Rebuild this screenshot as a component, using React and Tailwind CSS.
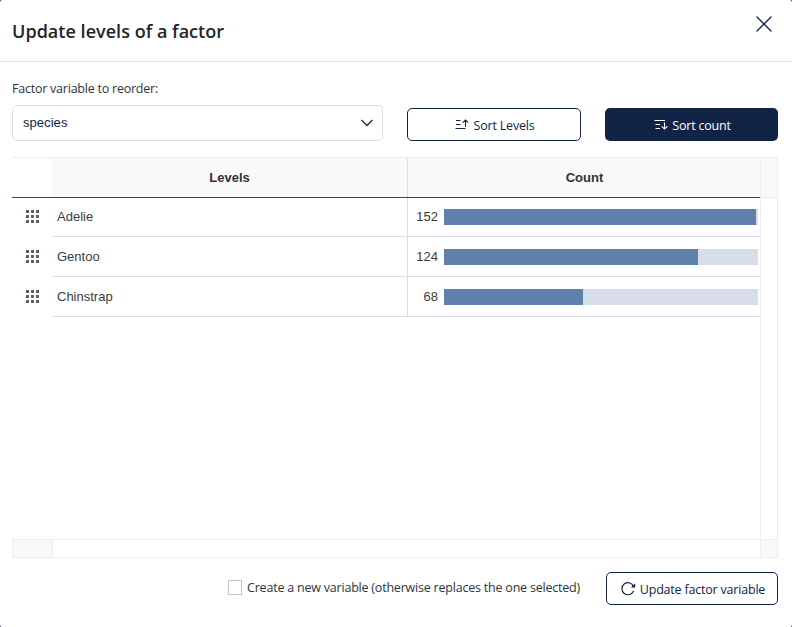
const rows = [
  { name: 'Adelie', count: 152, width: 312 },
  { name: 'Gentoo', count: 124, width: 254 },
  { name: 'Chinstrap', count: 68, width: 139 },
];

function GripIcon() {
  return (
    <svg width="13" height="13" viewBox="0 0 13 13" fill="#5b6067" shapeRendering="crispEdges">
      {[0, 5, 10].map((y) => [0, 5, 10].map((x) => <rect key={`${x}-${y}`} x={x} y={y} width="3" height="3" />))}
    </svg>
  );
}

function SortUpIcon() {
  return (
    <svg width="14" height="12" viewBox="0 0 14 12" fill="none" stroke="currentColor" strokeWidth="1.1">
      <path d="M1 1.5H5.5M1 5.5H5.5M.5 9.5H10.5M10.5 8V1M7.7 3.6L10.5 .9L13.3 3.6" />
    </svg>
  );
}

function SortDownIcon() {
  return (
    <svg width="14" height="12" viewBox="0 0 14 12" fill="none" stroke="currentColor" strokeWidth="1.1">
      <path d="M.5 1.5H11M1.5 5.5H6M1.5 9.5H6M10.5 3.5V10M7.7 7.4L10.5 10.1L13.3 7.4" />
    </svg>
  );
}

export default function App() {
  return (
    <div className="h-[627px] w-[792px] bg-[#101c38]">
      <div className="flex h-full flex-col overflow-hidden rounded-[2px] bg-white font-['Open_Sans',sans-serif] text-[12.5px] tracking-[-0.2px] text-[#30353a]">
        <header className="flex h-[62px] shrink-0 items-center justify-between border-b border-[#dee2e6] pl-3 pr-5">
          <h1 className="whitespace-nowrap text-[18px] font-semibold leading-6 tracking-[0.03px] text-[#212529]">Update levels of a factor</h1>
          <button className="mb-[14px] text-[#112446]" aria-label="Close">
            <svg className="block" width="16" height="16" viewBox="0 0 16 16" fill="none" stroke="currentColor" strokeWidth="1.3">
              <path d="M.5 .5L15.5 15.5M15.5 .5L.5 15.5" />
            </svg>
          </button>
        </header>

        <section className="flex h-[95px] shrink-0 pl-3">
          <div className="w-[371px] pt-[18px]">
            <label className="block h-[25px] whitespace-nowrap leading-[18px] tracking-[-0.23px]">Factor variable to reorder:</label>
            <div className="flex h-9 items-center justify-between rounded-[5px] border border-[#dcdddf] pl-[10px] pr-2 text-[#112446]">
              <span className="font-['Liberation_Sans',Arial,sans-serif] text-[13px] tracking-[0.05px]">species</span>
              <svg width="14" height="10" viewBox="0 0 14 10" fill="none" stroke="#212529" strokeWidth="1.3">
                <path d="M1.5 2L7 7.5L12.5 2" />
              </svg>
            </div>
          </div>
          <button className="ml-6 mt-[46px] flex h-[33px] w-[174px] items-center justify-center gap-[5px] rounded-[5px] border border-[#112446] pl-px pt-px text-[#112446]">
            <SortUpIcon />
            <span className="whitespace-nowrap pt-[3px]">Sort Levels</span>
          </button>
          <button className="ml-6 mt-[46px] flex h-[33px] w-[173px] items-center justify-center gap-1 rounded-[5px] bg-[#112446] pl-[2px] pt-px text-white">
            <SortDownIcon />
            <span className="whitespace-nowrap pt-[3px]">Sort count</span>
          </button>
        </section>

        <main className="ml-3 flex h-[401px] w-[766px] shrink-0 flex-col border-t border-[#ededed] font-['Liberation_Sans',Arial,sans-serif] text-[13px] tracking-normal text-[#3c3c3c]">
          <div className="flex h-[381px]">
            <div className="w-[748px]">
              <div className="flex h-10 border-b border-[#3f465c] font-bold text-[#333]">
                <div className="w-10" />
                <div className="flex w-[356px] items-center justify-center border-r border-[#d7dce8] bg-[#f9f9f9]"><span>Levels</span></div>
                <div className="flex w-[352px] items-center justify-center bg-[#f9f9f9] pl-px"><span>Count</span></div>
              </div>
              {rows.map((row, i) => (
                <div key={row.name} className={i === 0 ? 'flex h-[39px]' : 'flex h-10'}>
                  <div className="flex w-[41px] items-center justify-center pb-[2px]"><GripIcon /></div>
                  <div className="flex w-[355px] items-center border-b border-r border-[#d7dce8] pl-1"><span>{row.name}</span></div>
                  <div className="flex w-[352px] items-center border-b border-[#d7dce8]">
                    <span className="w-[30px] text-right">{row.count}</span>
                    <div className="ml-[6px] h-4 w-[314px] bg-[#d8dee9]">
                      <div className="h-full bg-[#5e81ac]" style={{ width: row.width }} />
                    </div>
                  </div>
                </div>
              ))}
            </div>
            <div className="w-[18px] border-x border-[#ededed]">
              <div className="h-10 border-b border-[#ededed] bg-[#f9f9f9]" />
            </div>
          </div>
          <div className="flex h-[19px] border border-[#ededed]">
            <div className="w-10 border-r border-[#ededed] bg-[#f9f9f9]" />
            <div className="flex-1" />
            <div className="w-[17px] border-l border-[#ededed] bg-[#f9f9f9]" />
          </div>
        </main>

        <footer className="flex h-[69px] items-start justify-end pr-[14px] pt-[14px]">
          <label className="mr-[26px] flex h-[31px] items-center gap-[5px]">
            <span className="h-[15px] w-[14px] border border-[#bdc5cb]" />
            <span className="whitespace-nowrap pt-px tracking-[-0.21px]">Create a new variable (otherwise replaces the one selected)</span>
          </label>
          <button className="flex h-[33px] w-[172px] items-center justify-center gap-1 rounded-[5px] border border-[#112446] pl-[2px] text-[#112446]">
            <svg width="15" height="14" viewBox="0 0 15 14" fill="none" stroke="currentColor" strokeWidth="1.2">
              <path d="M12.5 9A6 6 0 1 1 12.6 4.7" />
              <path d="M14.2 1.2V5.6H10Z" fill="currentColor" stroke="none" />
            </svg>
            <span className="whitespace-nowrap pt-[3px]">Update factor variable</span>
          </button>
        </footer>
      </div>
    </div>
  );
}
